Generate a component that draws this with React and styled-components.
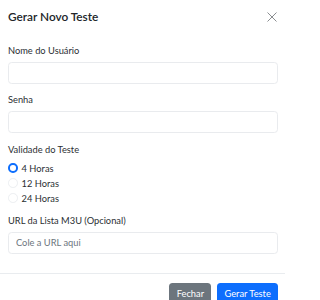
import React from "react";
import styled, { createGlobalStyle } from "styled-components";

const Global = createGlobalStyle`
  html, body { margin: 0; padding: 0; background: #fff; }
  body {
    font-family: Lato, "Liberation Sans", sans-serif;
    color: #212529;
  }
  * { box-sizing: border-box; }
`;

const Modal = styled.div`
  width: 285px;
  background: #fff;
`;

const Header = styled.div`
  display: flex;
  align-items: center;
  justify-content: space-between;
  height: 34px;
  padding: 0 7px 0 8px;
`;

const Title = styled.h5`
  margin: 0;
  font-size: 11.8px;
  font-weight: 600;
  line-height: 14.4px;
  color: #212529;
`;

const Close = styled.button`
  display: flex;
  align-items: center;
  justify-content: center;
  width: 14px;
  height: 14px;
  padding: 0;
  margin-right: -1px;
  border: 0;
  background: transparent;
  color: #8a8d90;
  cursor: pointer;
`;

const Body = styled.div`
  padding: 10px 7px 10px 8px;
`;

const Group = styled.div`
  margin-bottom: ${(p) => p.$mb ?? 9.4}px;
`;

const Label = styled.label`
  display: block;
  font-size: 9.3px;
  line-height: 14.4px;
  margin-bottom: 3.6px;
  color: #2b2f33;
`;

const Input = styled.input`
  display: block;
  width: 100%;
  height: 22px;
  padding: 0 7px;
  font-family: inherit;
  font-size: 9.3px;
  color: #212529;
  background: #fff;
  border: 1px solid #e9ebee;
  border-radius: 3.6px;
  outline: none;
  &::placeholder { color: #6c757d; }
`;

const RadioRow = styled.label`
  display: flex;
  align-items: center;
  height: 15px;
  font-size: 9.3px;
  color: #2b2f33;
  gap: 4px;
`;

const RadioDot = styled.span`
  width: 9.6px;
  height: 9.6px;
  border-radius: 50%;
  flex: none;
  background: #fff;
  border: ${(p) => (p.$checked ? "2.8px solid #0d6efd" : "1px solid #eceef1")};
`;

const Footer = styled.div`
  display: flex;
  justify-content: flex-end;
  gap: 6px;
  border-top: 1px solid #e9ecef;
  padding: 9px 7px 9px 8px;
`;

const Button = styled.button`
  height: 22.8px;
  padding: 0 7.2px;
  font-family: inherit;
  font-size: 9.3px;
  line-height: 22.8px;
  color: #fff;
  border: 0;
  border-radius: 3.6px;
  background: ${(p) => (p.$variant === "primary" ? "#0d6efd" : "#6c757d")};
`;

export default function App() {
  const options = ["4 Horas", "12 Horas", "24 Horas"];
  return (
    <Modal>
      <Global />
      <Header>
        <Title>Gerar Novo Teste</Title>
        <Close aria-label="Close">
          <svg width="10" height="10" viewBox="0 0 10 10">
            <path d="M0.5 0.5 L9.5 9.5 M9.5 0.5 L0.5 9.5" stroke="currentColor" strokeWidth="1" />
          </svg>
        </Close>
      </Header>
      <Body>
        <Group>
          <Label>Nome do Usuário</Label>
          <Input />
        </Group>
        <Group>
          <Label>Senha</Label>
          <Input type="password" />
        </Group>
        <Group $mb={8}>
          <Label>Validade do Teste</Label>
          {options.map((o, i) => (
            <RadioRow key={o}>
              <RadioDot $checked={i === 0} />
              {o}
            </RadioRow>
          ))}
        </Group>
        <Group>
          <Label>URL da Lista M3U (Opcional)</Label>
          <Input placeholder="Cole a URL aqui" />
        </Group>
      </Body>
      <Footer>
        <Button>Fechar</Button>
        <Button $variant="primary">Gerar Teste</Button>
      </Footer>
    </Modal>
  );
}
